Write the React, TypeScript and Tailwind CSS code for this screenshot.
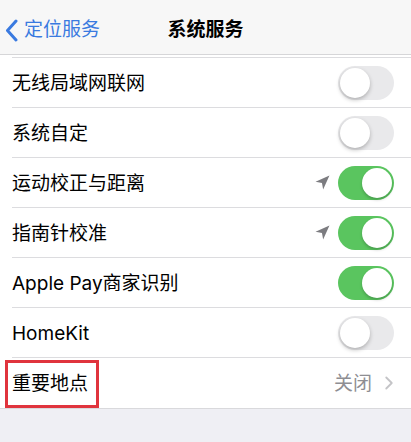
import { ChevronRight } from "lucide-react";

type Row = {
  label: string;
  on?: boolean;
  arrow?: boolean;
  detail?: string;
  marked?: boolean;
};

const rows: Row[] = [
  { label: "无线局域网联网", on: false },
  { label: "系统自定", on: false },
  { label: "运动校正与距离", on: true, arrow: true },
  { label: "指南针校准", on: true, arrow: true },
  { label: "Apple Pay商家识别", on: true },
  { label: "HomeKit", on: false },
  { label: "重要地点", detail: "关闭", marked: true },
];

function Toggle({ on }: { on: boolean }) {
  return (
    <div
      className={
        on
          ? "relative w-[56px] h-[34px] rounded-full bg-[#5ac55f]"
          : "relative w-[56px] h-[34px] rounded-full bg-[#e9e9eb]"
      }
    >
      <div
        className={
          on
            ? "absolute top-[2px] right-[2px] w-[30px] h-[30px] rounded-full bg-white shadow-[0_2px_3px_rgba(0,0,0,0.2)]"
            : "absolute top-[2px] left-[2px] w-[30px] h-[30px] rounded-full bg-white shadow-[0_2px_4px_rgba(0,0,0,0.25)]"
        }
      />
    </div>
  );
}

function LocationArrow() {
  return (
    <svg width="15" height="15" viewBox="0 0 14 14" className="mr-[8px]">
      <path d="M13.5 0.5 L0.5 6.4 L6.5 7.5 L7.6 13.5 Z" fill="#7c7c80" />
    </svg>
  );
}

export default function App() {
  return (
    <div className="w-[411px] h-[442px] overflow-hidden bg-[#efeff4] font-['Inter','Noto_Sans_CJK_SC',sans-serif] text-black">
      {/* nav bar */}
      <div className="relative h-[55px] pt-[7px] bg-[#f7f7f7] border-b border-[#d6d6d8] flex items-center">
        <div className="flex items-center text-[#3a7ae0] pl-[5px]">
          <svg width="13" height="23" viewBox="0 0 13 23" className="mr-[6px]">
            <path d="M11 2 L2.5 11.5 L11 21" fill="none" stroke="currentColor" strokeWidth="3" strokeLinecap="round" strokeLinejoin="round" />
          </svg>
          <span className="text-[19px]">定位服务</span>
        </div>
        <div className="absolute inset-0 pt-[7px] flex items-center justify-center pointer-events-none">
          <span className="text-[19px] font-semibold">系统服务</span>
        </div>
      </div>

      {/* settings list */}
      <div className="bg-white border-b border-[#d9d9dc]">
        <div className="h-[3px] ml-3 border-b border-[#dcdcdf]" />
        {rows.map((row, i) => (
          <div
            key={row.label}
            className={
              i === rows.length - 1
                ? "relative h-[50px] ml-3 flex items-center pr-[11px]"
                : "relative h-[50px] ml-3 flex items-center pr-[17px] border-b border-[#dcdcdf]"
            }
          >
            <span className="text-[19px] pt-[3px] flex-1">{row.label}</span>
            {row.arrow && <LocationArrow />}
            {row.on !== undefined && <Toggle on={row.on} />}
            {row.detail && (
              <div className="flex items-center text-[#8e8e93]">
                <span className="text-[19px] pt-[3px]">{row.detail}</span>
                <ChevronRight size={22} strokeWidth={2} className="ml-[6px] text-[#c4c4c7]" />
              </div>
            )}
            {row.marked && (
              <div className="absolute -left-[7px] top-[2px] w-[94px] h-[48px] border-[3px] border-[#e0343d]" />
            )}
          </div>
        ))}
      </div>
    </div>
  );
}
